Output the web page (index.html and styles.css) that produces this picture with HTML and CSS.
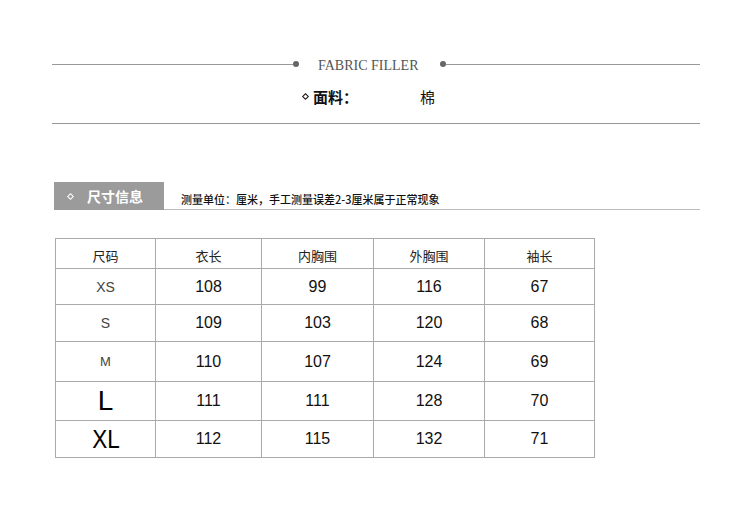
FILE: index.html
```html
<!DOCTYPE html>
<html lang="zh">
<head>
<meta charset="utf-8">
<title>FABRIC FILLER</title>
<link rel="stylesheet" href="styles.css">
</head>
<body>
<div class="page">
  <div class="title-row">
    <span class="line line-left"></span>
    <span class="dot"></span>
    <span class="title">FABRIC FILLER</span>
    <span class="dot"></span>
    <span class="line line-right"></span>
  </div>
  <div class="fabric">
    <span class="diamond"></span><span class="label">面料：</span><span class="value">棉</span>
  </div>
  <div class="rule"></div>

  <div class="size-head">
    <div class="tag"><span class="diamond diamond-white"></span><span class="tag-text">尺寸信息</span></div>
    <div class="note">测量单位：厘米，手工测量误差2-3厘米属于正常现象</div>
  </div>

  <table class="size-table">
    <colgroup>
      <col class="c1"><col class="c2"><col class="c3"><col class="c4"><col class="c5">
    </colgroup>
    <tr class="r-head"><th>尺码</th><th>衣长</th><th>内胸围</th><th>外胸围</th><th>袖长</th></tr>
    <tr class="r1"><td class="sz sz-xs">XS</td><td>108</td><td>99</td><td>116</td><td>67</td></tr>
    <tr class="r2"><td class="sz sz-s">S</td><td>109</td><td>103</td><td>120</td><td>68</td></tr>
    <tr class="r3"><td class="sz sz-m">M</td><td>110</td><td>107</td><td>124</td><td>69</td></tr>
    <tr class="r4"><td class="sz sz-l">L</td><td>111</td><td>111</td><td>128</td><td>70</td></tr>
    <tr class="r5"><td class="sz sz-xl">XL</td><td>112</td><td>115</td><td>132</td><td>71</td></tr>
  </table>
</div>
</body>
</html>
```

FILE: styles.css
```css
* { box-sizing: border-box; }
html, body { margin: 0; padding: 0; background: #fff; }
body {
  font-family: "Noto Sans CJK SC", "Liberation Sans", sans-serif;
  color: #111;
}
.page {
  width: 750px;
  padding: 0 50px 0 52px;
}

/* title */
.title-row {
  display: flex;
  align-items: center;
  height: 20px;
  margin-top: 54px;
}
.line { height: 1px; background: #999; }
.line-left { width: 241px; }
.line-right { flex: 1; }
.dot {
  width: 6px; height: 6px;
  border-radius: 50%;
  background: #666;
  flex: none;
}
.title {
  font-family: "Liberation Serif", serif;
  font-size: 14px;
  color: #555;
  margin: 4px 22px 0 19px;
  white-space: nowrap;
}

/* fabric */
.fabric {
  display: flex;
  align-items: center;
  height: 24px;
  margin-top: 10px;
  padding-left: 251px;
}
.diamond {
  width: 5px; height: 5px;
  border: 1.3px solid #111;
  transform: rotate(45deg);
  margin-right: 5px;
  flex: none;
}
.label {
  font-size: 15px;
  font-weight: 700;
  color: #111;
}
.value {
  font-size: 15px;
  margin-left: 62px;
  color: #111;
}
.rule {
  height: 1px;
  background: #999;
  margin-top: 15px;
}

/* size header */
.size-head {
  display: flex;
  margin-top: 58px;
}
.tag {
  width: 110px;
  height: 28px;
  margin-left: 2px;
  background: #9b9b9b;
  display: flex;
  align-items: center;
  padding-left: 14px;
}
.diamond-white {
  border-color: #fff;
  margin-right: 14px;
}
.tag-text {
  color: #fff;
  font-size: 14px;
  font-weight: 700;
}
.note {
  flex: 1;
  border-bottom: 1px solid #bbb;
  font-size: 11px;
  font-weight: 500;
  color: #111;
  padding: 9px 0 0 17px;
  white-space: nowrap;
}

/* table */
.size-table {
  margin: 28px 0 0 3px;
  border-collapse: collapse;
  table-layout: fixed;
  width: 540px;
}
.c1 { width: 100px; }
.c2 { width: 106px; }
.c3 { width: 112px; }
.c4 { width: 111px; }
.c5 { width: 110px; }
.size-table th,
.size-table td {
  border: 1px solid #aaa;
  text-align: center;
  vertical-align: middle;
  padding: 0;
}
.size-table th {
  font-size: 13px;
  font-weight: 400;
  color: #222;
  padding-top: 3px;
}
.size-table td {
  font-family: "Liberation Sans", sans-serif;
  font-size: 16px;
  color: #111;
}
.r-head { height: 30px; }
.r1 { height: 36px; }
.r2 { height: 37px; }
.r3 { height: 40px; }
.r4 { height: 39px; }
.r5 { height: 37px; }
.size-table td.sz-xs,
.size-table td.sz-s { font-size: 14px; color: #444; }
.size-table td.sz-m { font-size: 13px; color: #444; }
.size-table td.sz-l { font-size: 28px; color: #000; }
.size-table td.sz-xl { font-size: 25px; color: #000; transform: scaleX(0.9); }
```
